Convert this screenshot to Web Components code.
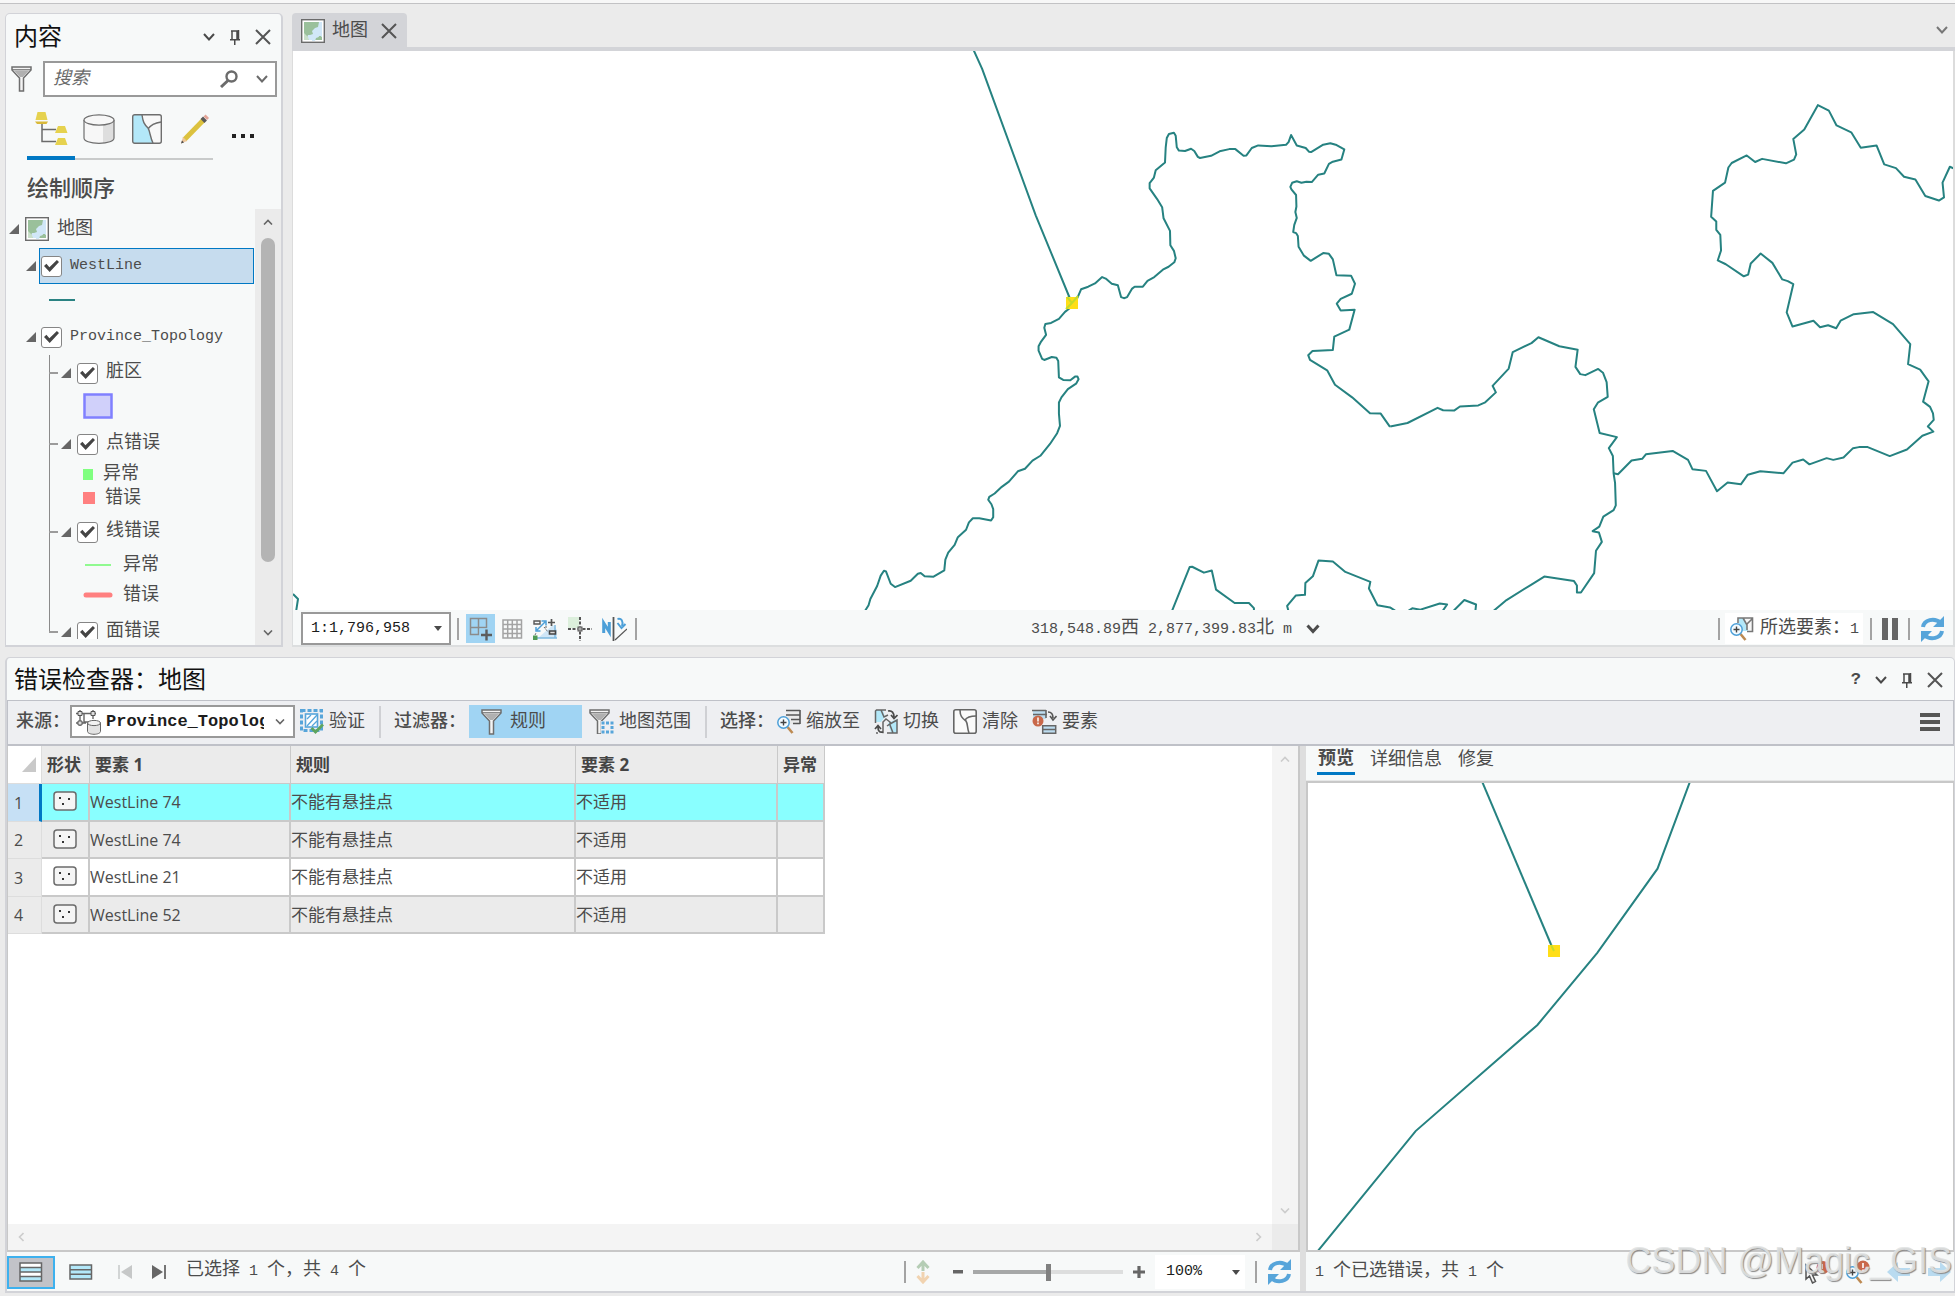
<!DOCTYPE html>
<html lang="zh-CN">
<head>
<meta charset="utf-8">
<title>错误检查器</title>
<style>
  html, body { margin: 0; height: 100%; }
  body { background: #ebebeb; overflow: hidden; font-family: "Liberation Mono", "Noto Sans CJK SC", sans-serif; color: #4c4c4c; }
</style>
</head>
<body>
<gis-app></gis-app>
<script>
/* ---------- shared helpers ---------- */

// Latin runs are set a little smaller than the Chinese around them.
const t = s => s.replace(/[\x20-\x7e]+/g, m => `<span class="lat">${m}</span>`);

const base = `
  *, *::before, *::after { box-sizing: border-box; }
  :host { display: block; box-sizing: border-box; }
  .lat { font-family: "Liberation Mono", monospace; font-size: 15px; white-space: pre; }
  button, select, input { font: inherit; color: inherit; margin: 0; }
  button { display: inline-flex; align-items: center; justify-content: center; background: none; border: 0; padding: 0; white-space: nowrap; }
  h1, h2, p { margin: 0; font-weight: inherit; font-size: inherit; }
  .sep { flex: none; width: 2px; height: 22px; background: #a3a3a3; }
  .grow { flex: 1; }
`;

const define = (tag, css, html) => customElements.define(tag, class extends HTMLElement {
  connectedCallback() {
    if (this.shadowRoot) return;
    const root = this.attachShadow({ mode: "open" });
    root.innerHTML = `<style>${base}${css}</style>${typeof html === "function" ? html(this) : html}`;
  }
});

/* ---------- icons: [width, height, drawing] ---------- */

const refresh = `<g fill="none" stroke="#57a5da" stroke-width="4"><path d="M3 11C4 4 14 1 21 7"/><path d="M22 15C21 22 11 25 4 19"/></g><path fill="#57a5da" d="M24 0v11H13zM1 26V15h11z"/>`;
const funnel = `<path d="M1 1h19v3l-7.500 8V25h-4V12L1 4z" fill="#f4f4f4" stroke="#6e6e6e" stroke-width="1.500"/><path d="M3 4.500h15l-6 6.500h-3z" fill="#b0b0b0"/><path d="M1 3.700h19" stroke="#6e6e6e"/>`;
const magnifier = (x, y) => `<g transform="translate(${x} ${y})"><path d="M10.500 11l5 6" stroke="#bd8a52" stroke-width="2.600"/><circle cx="6.500" cy="6.500" r="5.700" fill="#f4fbff" stroke="#4c9fd8" stroke-width="1.500"/><path d="M3.500 6.500h6M6.500 3.500v6" stroke="#444" stroke-width="1.400"/></g>`;

const icons = {
  chevron: [12, 8, `<path d="M1 1l5 5.500L11 1" fill="none" stroke="currentColor" stroke-width="2"/>`],
  chevronBold: [14, 10, `<path d="M1.500 1.500L7 7.500l5.500-6" fill="none" stroke="currentColor" stroke-width="3"/>`],
  chevronUp: [10, 6, `<path d="M1 5.500l4-4 4 4" fill="none" stroke="currentColor" stroke-width="1.600"/>`],
  chevronDown: [10, 6, `<path d="M1 .5l4 4 4-4" fill="none" stroke="currentColor" stroke-width="1.600"/>`],
  chevronLeft: [6, 10, `<path d="M5.500 1l-4 4 4 4" fill="none" stroke="currentColor" stroke-width="1.600"/>`],
  chevronRight: [6, 10, `<path d="M.5 1l4 4-4 4" fill="none" stroke="currentColor" stroke-width="1.600"/>`],
  caret: [8, 5, `<path d="M0 0h8L4 5z" fill="#4a4a4a"/>`],
  pin: [12, 15, `<path d="M3 1v8M9.500 0v9M8 1v8M2 1h8" fill="none" stroke="#4a4a4a" stroke-width="1.500"/><path d="M8 1h2v8H8zM1 9h10v1.500H1zM5 10h1.500v5H5z" fill="#4a4a4a"/>`],
  close: [16, 16, `<path d="M1 1l14 14M15 1L1 15" stroke="#555" stroke-width="2"/>`],
  funnel: [21, 26, funnel],
  search: [18, 18, `<circle cx="11.500" cy="6.500" r="5" fill="none" stroke="#6b6b6b" stroke-width="2.400"/><path d="M8 10.500l-7 6.500" stroke="#6b6b6b" stroke-width="3"/>`],
  map: [24, 24, `<rect x=".7" y=".7" width="22.600" height="22.600" fill="#fff" stroke="#6b6b6b" stroke-width="1.400"/><path fill="#9ac09b" d="M3 3h18v18H3z"/><path fill="#d1e7f8" d="M21 3h-3l-1 5-3 1-3 3 1 3-3 1H7l-1 3 2 2h3l0 1h3l1-3 3-1h3z"/><path d="M17 21l1-4h2l1 2v2z" fill="#9ac09b"/><path d="M3 14l4 4 1 3H3z" fill="#c9dfc9"/>`],
  order: [34, 34, `<path d="M8 12v17.500h14M8 17.500h14" fill="none" stroke="#6b6b6b" stroke-width="1.500"/><path fill="#e6d24f" d="M3.500 0h8l2 8h-12zM24 14h7l2.500 7H21zM24 26h7l2.500 7H21z"/><path fill="#d9b93a" d="M1 9.500h13L12.500 12H3z"/>`],
  cylinder: [32, 30, `<path d="M1 6v18c0 3 6 5.300 15 5.300S31 27 31 24V6z" fill="#f7f7f7"/><path d="M20 10v19c7-.7 11-2.500 11-5V6c-1 2.500-5 3.700-11 4z" fill="#dedede"/><path d="M1 6v18c0 3 6 5.300 15 5.300S31 27 31 24V6" fill="none" stroke="#6e6e6e" stroke-width="1.200"/><ellipse cx="16" cy="6" rx="15" ry="5.200" fill="#f7f7f7" stroke="#6e6e6e" stroke-width="1.200"/>`],
  selection: [30, 30, `<rect x=".7" y=".7" width="28.600" height="28.600" rx="2" fill="#f8f8f8"/><path fill="#b3e8f9" d="M1 1h9c1 7 2 9 6 13 2 3 2 9 5 15H1z"/><path d="M10 1c1 7 2 9 6 13 2 3 2 9 5 15M16 15c2-3 6-6 13-7" fill="none" stroke="#6e6e6e" stroke-width="1.400"/><rect x=".7" y=".7" width="28.600" height="28.600" rx="2" fill="none" stroke="#6e6e6e" stroke-width="1.400"/>`],
  pencil: [30, 30, `<path d="M4.500 25.500L23.500 6" stroke="#dcc23f" stroke-width="5"/><path d="M1 29.500l2-6.500 4 4z" fill="#ecc59a"/><path d="M1 29.500l1-3 2 2z" fill="#4c4c4c"/><path d="M22.500 7l2.500-2.500" stroke="#5a5a5a" stroke-width="5.500"/><path d="M25.300 4.200l2-1.900" stroke="#e3a497" stroke-width="5"/>`],
  dots: [22, 4, `<path fill="#222" d="M0 0h4v4H0zM9 0h4v4H9zM18 0h4v4h-4z"/>`],
  twisty: [10, 10, `<path d="M10 0v10H0z" fill="#666"/>`],
  snap: [24, 24, `<path d="M1.500 1.500h16v9h-16zM1.500 1.500h8v16h-8zM1.500 10.500h8" fill="none" stroke="#8b8b8b" stroke-width="1.500"/><path d="M10.500 11.500h13v12h-13z" fill="#a0d4f3"/><path d="M12 18h11M17.500 12.500v11" stroke="#5d5d5d" stroke-width="2.400"/>`],
  grid: [21, 20, `<path d="M1 1h18.500v18H1zM1 5.500h18.500M1 10h18.500M1 14.500h18.500M5.700 1v18M10.300 1v18M15 1v18" fill="none" stroke="#a3a3a3" stroke-width="1.500"/>`],
  infer: [25, 23, `<path d="M5 21L20 8l4 5v8z" fill="#cfe6f7"/><path d="M3 21h21M22 8v13" stroke="#7fb9e0" stroke-width="1.500" fill="none"/><path d="M1 4h6v3H1z" fill="none" stroke="#555" stroke-width="1.400"/><path d="M15 5.500h7M18.500 2v7" stroke="#555" stroke-width="1.700"/><path d="M4 13l8-8M8.500 4H13v4.500M3 10v4h4.500" fill="none" stroke="#4c9fd8" stroke-width="1.500"/><path d="M11 10l4 5M2 18l1-2M13 9v2" stroke="#666" stroke-dasharray="2 1"/><path d="M16.500 14h6v3h-6z" fill="#ddd" stroke="#444" stroke-width="1.600"/><path d="M0 18.500h4.500V23H0z" fill="#4f9b55"/>`],
  cross: [24, 24, `<path fill="#dcefdc" d="M0 0h11v11H0z"/><path d="M0 12h9.500M14.500 12H24M12 0v9.500M12 14.500V24" stroke="#555" stroke-width="2" stroke-dasharray="3 1.500"/><rect x="10" y="10" width="4" height="4" fill="#aaa" stroke="#555"/>`],
  north: [25, 24, `<path d="M1.700 16V6l5.600 9V5" fill="none" stroke="#4c9fd8" stroke-width="3"/><path d="M11.500 0v24" stroke="#555" stroke-width="1.800"/><path d="M13 23L25 12" stroke="#555" stroke-width="1.200"/><path d="M15.500 2c4-1 6 2 4.500 7M15.500 6l4 5 4-4" fill="none" stroke="#4c9fd8" stroke-width="2"/>`],
  zoomSelected: [24, 24, `<path d="M9 1h13.500v13H9z" fill="#f7f7f7"/><path d="M9 1h5l2 5 2 8H9z" fill="#b3e8f9"/><path d="M8 6V1h14.500v13.500H17M13 1l4 7v5M17 7l5-5" fill="none" stroke="#777" stroke-width="1.600"/>${magnifier(0, 6)}`],
  pause: [16, 22, `<path fill="#666" d="M0 0h6v22H0zM10 0h6v22h-6z"/>`],
  refresh: [25, 26, refresh],
  source: [26, 26, `<path d="M4 1v16M0 4.500h20M17 1v9M0 14h10M8 4v9h8" fill="none" stroke="#666" stroke-width="1.400"/><path d="M2 2.500h4v4H2zM15 2.500h4v4h-4zM2 12h4v4H2z" fill="#ddd" stroke="#555"/><path d="M11.500 14v8.500c0 1.500 3 2.800 6.500 2.800s6.500-1.300 6.500-2.800V14z" fill="#e3e3e3" stroke="#666"/><ellipse cx="18" cy="14" rx="6.500" ry="2.600" fill="#f2f2f2" stroke="#666"/>`],
  validate: [24, 25, `<rect x="1.500" y="1.500" width="20" height="20" fill="none" stroke="#57a5da" stroke-width="3" stroke-dasharray="4 2"/><rect x="5.500" y="5" width="12" height="13" fill="#fff" stroke="#57a5da" stroke-width="1.600"/><path d="M7 17L17 6M7 10l4-4M12 17l5-5" stroke="#57a5da" stroke-width="1.300"/><path d="M11.500 19l4 4L23 15.500" fill="none" stroke="#5da45f" stroke-width="2.800"/>`],
  extent: [25, 25, `${funnel}<path d="M12 12h13v13H12z" fill="#eeeff2"/><path d="M12.500 12.500h3v3h-3zM17 12.500h3v3h-3zM21.500 12.500h3v3h-3zM12.500 17h3v3h-3zM21.500 17h3v3h-3zM12.500 21.500h3v3h-3zM17 21.500h3v3h-3zM21.500 21.500h3v3h-3z" fill="#57a5da"/>`],
  zoomTo: [24, 25, `<path d="M9 1h14v14H13" fill="#e9e9e9"/><path d="M9 1.500h14M9 6h14M14 10.500h9M16 14.500h7M23 1v14" stroke="#555" stroke-width="1.600"/>${magnifier(0, 7)}`],
  toggle: [24, 25, `<path d="M1 1h8l2 7-4 5H1zM14 14l9-4v14h-6z" fill="#b3e8f9"/><path d="M1.500 14V2l1-1H12M7 1l3 7 4-2M9 24.200V13l3-3 4 3v3M13 17l3-2 7-4v13H13M16 16l3 8M4 24h-2" fill="none" stroke="#666" stroke-width="1.500"/><path d="M14 2c4-1 6 2 6 6M17 6l3 3.500L23.500 6M9 23c-4 1-5-2-5-5M1 20l3-3.500L7 20" fill="none" stroke="#4a4a4a" stroke-width="1.700"/>`],
  clear: [24, 25, `<rect x=".8" y=".8" width="22.400" height="23.400" rx="2" fill="#fafafa" stroke="#666" stroke-width="1.600"/><path d="M7 1c0 6 2 8 6 11 2 3 1 7 3 12M12 11c2-3 6-4 11-4" fill="none" stroke="#666" stroke-width="1.600"/>`],
  features: [25, 25, `<path d="M1 1h13v9H1z" fill="#bcdcf0"/><path d="M0 1.500h14M1 5.500h14M14 1v8" stroke="#666" stroke-width="1.600" fill="none"/><ellipse cx="6" cy="12" rx="5.500" ry="5.500" fill="#c9684a"/><path d="M6 8.500v4M6 13.500v1.800" stroke="#fff" stroke-width="1.500"/><path d="M10.700 16.700h13v7.500h-13zM10.700 20.500h13" fill="#bcdcf0" stroke="#666" stroke-width="1.500"/><path d="M16 3c4 0 5 2 5 6M18 7l3 4 3.500-4" fill="none" stroke="#555" stroke-width="1.600"/>`],
  menu: [20, 18, `<path d="M0 2h20M0 9h20M0 16h20" stroke="#555" stroke-width="4"/>`],
  shape: [24, 20, `<rect x="1" y="1" width="22" height="18" rx="3" fill="#f5f5f5" stroke="#6b6b6b" stroke-width="1.500"/><path fill="#333" d="M6 6h2v2H6zM15 7h2v2h-2zM9 12h2v2H9z"/>`],
  allRows: [24, 20, `<path d="M1 1h21.500v18H1z" fill="#fff"/><path d="M1 5.500h21.500V10H1zM1 14.500h21.500V19H1z" fill="#b3e8f9"/><path d="M1 1h21.500v18H1zM1 5.500h21.500M1 10h21.500M1 14.500h21.500" fill="none" stroke="#666" stroke-width="1.500"/>`],
  selRows: [24, 16, `<path d="M1 1h21.500v14H1zM1 5.700h21.500M1 10.300h21.500" fill="#b3e8f9" stroke="#666" stroke-width="1.500"/>`],
  first: [14, 14, `<path d="M1 0v14" stroke="#c6c8c8" stroke-width="1.500"/><path d="M14 0v14L3 7z" fill="#c6c8c8"/>`],
  last: [14, 14, `<path d="M13 0v14" stroke="#666" stroke-width="1.800"/><path d="M0 0v14l11-7z" fill="#666"/>`],
  height: [14, 24, `<path d="M7 2v9M1.500 8L7 2l5.500 6" fill="none" stroke="#b5cdb5" stroke-width="3"/><path d="M7 12v9M1.500 16L7 22l5.500-6" fill="none" stroke="#f1d3b0" stroke-width="3"/>`],
  minus: [10, 4, `<path fill="#666" d="M0 0h10v3.500H0z"/>`],
  plus: [12, 12, `<path d="M0 6h12M6 0v12" stroke="#666" stroke-width="3.200"/>`],
  selectError: [25, 24, `<circle cx="18" cy="7.500" r="6.500" fill="#c9684a"/><path d="M17 4v5M17 10v2" stroke="#fff" stroke-width="1.600"/><path d="M1 5v14l3.500-3 3 7 3-1.500-3-6.500H12z" fill="#f7f7f7" stroke="#555" stroke-width="1.500"/>`],
  zoomError: [25, 24, `<circle cx="17" cy="7" r="6.500" fill="#c9684a"/><path d="M17 3v5M17 9.500v2" stroke="#fff" stroke-width="1.600"/>${magnifier(0, 6)}`],
  prev: [24, 20, `<path d="M0 10L11 0v6h12v8H11v6z" fill="#b9dbf0"/>`],
  next: [24, 20, `<path d="M24 10L13 0v6H1v8h12v6z" fill="#b9dbf0"/>`],
  corner: [14, 15, `<path d="M14 0v15H0z" fill="#c9c9c9"/>`],
};

define("gis-icon", `:host { display: inline-flex; flex: none; } svg { display: block; }`, el => {
  const [w, h, body] = icons[el.getAttribute("name")];
  return `<svg width="${w}" height="${h}" viewBox="0 0 ${w} ${h}" aria-hidden="true">${body}</svg>`;
});

/* ---------- window controls ---------- */

define("gis-window-controls",
  `:host { display: flex; align-items: center; gap: 14px; color: #4a4a4a; } .help { font-size: 17px; font-weight: bold; line-height: 20px; }`,
  el => `${el.hasAttribute("help") ? `<button class="help" aria-label="帮助">?</button>` : ""}
    <button aria-label="菜单"><gis-icon name="chevron"></gis-icon></button>
    <button aria-label="自动隐藏"><gis-icon name="pin"></gis-icon></button>
    <button aria-label="关闭"><gis-icon name="close"></gis-icon></button>`);

/* ---------- contents pane ---------- */

define("gis-layer", `
  :host { height: 36px; padding-left: 20px; font-size: 18px; line-height: 24px; }
  .row { display: flex; align-items: center; height: 100%; }
  .body { display: flex; align-items: center; flex: 1; height: 36px; padding-left: 1px; border: 1px solid transparent; margin: 0 1px 0 3px; gap: 8px; }
  :host([selected]) .body { background: #c6dcee; border-color: #0078c4; }
  :host([sub]) { padding-left: 43px; }
  :host([sub]) .row::before { content: ""; width: 9px; height: 2px; background: #9b9b9b; margin: 0 3px 0 0; }
  :host([sub]) .body { margin-left: 4px; }
  input { appearance: none; width: 21px; height: 21px; flex: none; border: 1px solid #858585; border-radius: 3px; background: #fff; display: grid; place-items: center; }
  input:checked::after { content: ""; width: 15px; height: 12px; background: #444; clip-path: polygon(0 50%, 16% 32%, 36% 60%, 86% 0, 100% 16%, 38% 100%); }
  label { white-space: nowrap; padding-bottom: 2px; }
`, el => `<div class="row"><gis-icon name="twisty"></gis-icon><div class="body"><input type="checkbox" id="c" checked><label for="c">${t(el.getAttribute("name"))}</label></div></div>`);

define("gis-symbol", `
  :host { display: flex; align-items: center; font-size: 18px; line-height: 24px; }
`, el => {
  const g = {
    teal: `<svg width="26" height="4"><path d="M0 2h26" stroke="#2a8383" stroke-width="2"/></svg>`,
    area: `<svg width="30" height="26"><rect x="1.500" y="1.500" width="27" height="23" fill="#d0d0fa" stroke="#8080ff" stroke-width="2.500"/></svg>`,
    greenDot: `<svg width="10" height="11"><path d="M0 0h10v11H0z" fill="#80ff80"/></svg>`,
    redDot: `<svg width="12" height="12"><path d="M0 0h12v12H0z" fill="#ff8080"/></svg>`,
    greenLine: `<svg width="30" height="4"><path d="M2 2h26" stroke="#90fa90" stroke-width="2"/></svg>`,
    redLine: `<svg width="30" height="6"><path d="M3 3h24" stroke="#ff8080" stroke-width="5" stroke-linecap="round"/></svg>`,
  }[el.getAttribute("kind")];
  return `${g}<slot></slot>`;
});

define("gis-contents", `
  :host { display: flex; flex-direction: column; width: 278px; flex: none; min-height: 0; background: #f7f9f9; border: 2px solid #d2d3d8; border-width: 1px 2px 2px 1px; border-radius: 5px 5px 0 0; overflow: hidden; }
  header { display: flex; align-items: center; justify-content: space-between; height: 46px; padding: 0 10px 0 8px; flex: none; }
  h1 { font-size: 24px; line-height: 36px; padding-top: 3px; color: #111; }
  .find { display: flex; align-items: center; gap: 11px; height: 38px; padding: 0 4px 0 5px; flex: none; }
  .box { flex: 1; display: flex; align-items: center; height: 36px; border: 2px solid #999; background: #fff; padding: 0 7px 0 8px; min-width: 0; }
  .box input { flex: 1; min-width: 0; border: 0; outline: 0; background: none; font-size: 18px; padding: 0; height: 28px; font-style: italic; }
  .box input::placeholder { color: #6a6a6a; opacity: 1; }
  .box button + button { margin-left: 18px; color: #6b6b6b; }
  nav { display: flex; align-items: flex-start; height: 66px; padding: 14px 0 0 21px; flex: none; }
  nav button { width: 48px; height: 48px; padding-bottom: 12px; border-bottom: 2px solid #c9cbcb; }
  nav button.on { border-bottom: 4px solid #0078c4; padding-bottom: 10px; }
  nav button.last { width: 42px; padding-left: 6px; }
  nav button.more { width: 60px; border: 0; padding: 0; }
  h2 { font-size: 22px; line-height: 30px; font-weight: 500; padding: 12px 0 0 21px; height: 45px; flex: none; }
  .scroll { display: flex; flex: 1; min-height: 0; }
  .tree { flex: 1; overflow: hidden; margin-bottom: 6px; }
  .rootrow { display: flex; align-items: center; height: 39px; padding-left: 3px; font-size: 18px; line-height: 24px; gap: 6px; }
  .rootrow span { padding-left: 2px; }
  .group { background: linear-gradient(#8b8b8b, #8b8b8b) 43px 0 / 1px calc(100% - 18px) no-repeat; }
  .s1 { height: 35px; padding: 0 0 4px 43px; } .s2 { height: 35px; padding: 0 0 5px 77px; }
  .s3 { height: 24px; padding-left: 77px; gap: 10px; } .s4 { height: 30px; padding-left: 77px; gap: 10px; }
  .end { margin-bottom: 4px; }
  .bar { width: 26px; background: #ebebeb; display: flex; flex-direction: column; align-items: center; justify-content: space-between; padding: 10px 0 9px; color: #666; }
  .thumb { width: 14px; flex: 1; margin: 13px 0 68px; border-radius: 7px; background: #b4b4b4; }
`, `
  <header><h1>内容</h1><gis-window-controls></gis-window-controls></header>
  <div class="find"><gis-icon name="funnel"></gis-icon>
    <div class="box"><input type="text" placeholder="搜索" aria-label="搜索"><button aria-label="查找"><gis-icon name="search"></gis-icon></button><button aria-label="搜索选项"><gis-icon name="chevron"></gis-icon></button></div></div>
  <nav>
    <button class="on" aria-label="按绘制顺序列出"><gis-icon name="order"></gis-icon></button>
    <button aria-label="按数据源列出"><gis-icon name="cylinder"></gis-icon></button>
    <button aria-label="按选择列出"><gis-icon name="selection"></gis-icon></button>
    <button class="last" aria-label="按编辑列出"><gis-icon name="pencil"></gis-icon></button>
    <button class="more" aria-label="更多"><gis-icon name="dots"></gis-icon></button>
  </nav>
  <h2>绘制顺序</h2>
  <div class="scroll">
    <div class="tree">
      <div class="rootrow"><gis-icon name="twisty"></gis-icon><gis-icon name="map"></gis-icon><span>地图</span></div>
      <gis-layer name="WestLine" selected></gis-layer>
      <gis-symbol class="s1" kind="teal"></gis-symbol>
      <gis-layer name="Province_Topology"></gis-layer>
      <div class="group">
        <gis-layer sub name="脏区"></gis-layer>
        <gis-symbol class="s2" kind="area"></gis-symbol>
        <gis-layer sub name="点错误"></gis-layer>
        <gis-symbol class="s3" kind="greenDot">异常</gis-symbol>
        <gis-symbol class="s3 end" kind="redDot">错误</gis-symbol>
        <gis-layer sub name="线错误"></gis-layer>
        <gis-symbol class="s4" kind="greenLine">异常</gis-symbol>
        <gis-symbol class="s4 end" kind="redLine">错误</gis-symbol>
        <gis-layer sub name="面错误"></gis-layer>
      </div>
    </div>
    <div class="bar"><gis-icon name="chevronUp"></gis-icon><div class="thumb"></div><gis-icon name="chevronDown"></gis-icon></div>
  </div>
`);

/* ---------- map view ---------- */

define("gis-map", `
  :host { display: flex; flex-direction: column; flex: 1; min-width: 0; min-height: 0; }
  .tabs { display: flex; align-items: flex-end; height: 38px; border-bottom: 4px solid #d3d4d8; flex: none; }
  .tab { display: flex; align-items: center; height: 34px; width: 115px; padding: 2px 10px 0 9px; background: #d3d4d8; border-radius: 4px 4px 0 0; font-size: 18px; line-height: 24px; }
  .tab span { padding-left: 7px; flex: 1; }
  .tabs .more { height: 34px; margin: 0 7px 0 auto; color: #777; }
  .canvas { flex: 1; min-height: 0; background: #fff; border: solid #dcdcdc; border-width: 0 2px 0 1px; overflow: hidden; }
  .canvas svg { display: block; width: 100%; height: 100%; }
  polyline { fill: none; stroke: #268281; stroke-width: 2; vector-effect: non-scaling-stroke; stroke-linejoin: round; }
  footer { display: flex; align-items: center; height: 37px; flex: none; background: #f7f9f9; border: solid #dcdedf; border-width: 0 2px 2px 1px; padding: 2px 8px 0; font-size: 18px; line-height: 24px; }
  .scale { position: relative; display: flex; align-items: center; height: 33px; width: 150px; }
  select { appearance: none; width: 100%; height: 33px; border: 2px solid #999; background: #fff; color: #1c1c1c; font-family: "Liberation Mono", monospace; font-size: 15px; padding: 0 8px; border-radius: 0; }
  .scale gis-icon { position: absolute; right: 9px; pointer-events: none; }
  .left { display: flex; align-items: center; }
  .tools { display: flex; align-items: center; gap: 10px; }
  .tools .on { background: #a0d4f3; width: 29px; height: 29px; margin: 0 -3px 0 7px; }
  .left .sep { margin-left: 6px; }
  .left .tools + .sep { margin-left: 8px; }
  .coords { display: flex; align-items: center; justify-content: center; flex: 1; gap: 14px; padding-right: 4px; }
  .right { display: flex; align-items: center; gap: 10px; }
  .sel { height: 31px; background: #fff; gap: 6px; padding: 0 4px 0 5px; margin: 0 -3px 0 -5px; font-size: 18px; }
`, `
  <div class="tabs"><div class="tab"><gis-icon name="map"></gis-icon><span>地图</span><button aria-label="关闭视图"><gis-icon name="close"></gis-icon></button></div>
    <button class="more" aria-label="视图列表"><gis-icon name="chevron"></gis-icon></button></div>
  <div class="canvas"><svg>
    <g transform="translate(557 -11) scale(.35714 .3699)">
      <polyline points="346,27 370,78 520,474 621,711"/>
      <polyline points="41,1545 52,1528 57,1511 76,1476 86,1448 95,1435 101,1437 114,1470 126,1479 170,1462 190,1443 198,1441 209,1450 234,1451 264,1434 267,1405 275,1386 293,1365 302,1344 325,1324 333,1304 344,1293 362,1293 395,1299 401,1290 401,1268 396,1255 387,1243 390,1235 405,1226 425,1208 445,1194 470,1166 490,1159 511,1137 533,1124 560,1092 580,1063 588,1043 585,1010 585,980 592,966 610,944 633,929 640,917 637,910 630,910 617,920 597,919 585,912 583,868 578,859 565,857 544,865 538,862 528,840 528,828 534,817 549,797 544,778 547,768 563,765 585,754 602,735 615,725 633,705 647,674 667,667 686,658 706,641 716,645 733,659 750,663 759,695 767,698 776,695 790,672 797,667 820,667 833,651 852,641 876,621 892,613 908,601 912,590 907,570 897,555 896,516 878,482 874,452 860,430 839,401 839,387 851,372 856,352 882,331 884,290 887,265 893,254 907,251 912,259 915,290 921,299 938,300 955,294 964,300 974,316 980,319 1011,313 1035,301 1062,295 1079,295 1102,313 1110,312 1125,292 1143,285 1180,287 1221,283 1228,276 1235,257 1251,285 1276,292 1285,302 1291,303 1325,283 1345,279 1360,283 1384,296 1376,323 1352,329 1341,335 1328,361 1311,364 1293,384 1278,383 1264,386 1251,382 1238,386 1233,397 1236,404 1249,419 1250,450 1247,465 1251,481 1244,500 1241,519 1249,522 1254,530 1256,559 1271,583 1290,597 1325,576 1341,578 1352,593 1362,636 1403,637 1414,659 1405,686 1374,700 1363,713 1374,731 1413,729 1398,783 1356,802 1352,838 1295,841 1283,852 1288,865 1336,893 1358,932 1406,966 1456,1009 1486,1010 1512,1046"/>
      <polyline points="901,1545 951,1425 958,1424 991,1440 1013,1434 1025,1486 1077,1522 1117,1522 1131,1536 1131,1545"/>
      <polyline points="1228,1545 1224,1530 1248,1502 1274,1500 1275,1468 1296,1450 1312,1407 1352,1410 1387,1438 1457,1465 1453,1483 1477,1528 1512,1534 1530,1545"/>
    </g>
    <g transform="translate(1087 29) scale(.36671 .34439)">
      <polyline points="28,1006 75,996 157,952 172,959 202,960 218,948 268,945 287,936 316,907 307,888 351,838 362,790 413,764 432,747 489,773 539,783 533,833 546,854 560,857 595,839 608,850 618,877 621,920 594,937 583,956 599,1025 646,1037 624,1069 635,1092 637,1142 641,1170 643,1235 637,1249 609,1268 598,1297 580,1310 597,1314 605,1341 589,1367 584,1432 548,1488 537,1488 537,1468 529,1455 448,1442 413,1465 345,1510 308,1543"/>
      <polyline points="637,1142 649,1145 686,1105 715,1100 725,1087 798,1077 840,1103 852,1130 889,1135 919,1194 948,1169 984,1174 1003,1146 1037,1136 1100,1142 1125,1111 1154,1102 1171,1116 1218,1098 1236,1103 1264,1096 1290,1069 1306,1066 1330,1066 1390,1092 1437,1073 1479,1033 1509,1021 1494,1006 1510,987 1508,968 1500,949 1481,934 1496,875 1473,841 1440,825 1446,767 1399,709 1345,674 1292,680 1256,699 1244,721 1222,712 1200,718 1182,699 1125,716 1109,675 1127,593 1112,584 1097,579 1070,531 1038,504 1011,533 1004,565 992,570 943,535 921,524 930,495 928,450 917,435 917,411 903,397 908,322 941,298 950,254 959,241 1000,219 1023,238 1042,229 1107,242 1129,231 1135,216 1127,171 1157,144 1194,73 1224,89 1245,132 1285,152 1311,197 1354,190 1375,245 1407,256 1429,281 1460,289 1487,337 1524,350 1538,341 1534,298 1554,252 1567,258"/>
      <polyline points="75,1543 88,1534 110,1538 163,1520 183,1523 170,1543"/>
      <polyline points="199,1543 230,1510 262,1523 260,1543"/>
    </g>
    <polyline points="0,543 5,548 3,561"/>
    <rect x="773" y="246" width="12" height="12" fill="#ffde17"/>
    <path d="M774 246l5 6 6-7M779 252l-6 6" fill="none" stroke="#c5dc2a" stroke-width="2"/>
  </svg></div>
  <footer>
    <div class="left">
      <div class="scale"><select aria-label="比例尺"><option>1:1,796,958</option></select><gis-icon name="caret"></gis-icon></div>
      <div class="sep"></div>
      <div class="tools">
        <button class="on" aria-label="捕捉"><gis-icon name="snap"></gis-icon></button>
        <button aria-label="格网"><gis-icon name="grid"></gis-icon></button>
        <button aria-label="推断约束"><gis-icon name="infer"></gis-icon></button>
        <button aria-label="动态约束"><gis-icon name="cross"></gis-icon></button>
        <button aria-label="地面到格网校正"><gis-icon name="north"></gis-icon></button>
      </div>
      <div class="sep"></div>
    </div>
    <div class="coords"><span>${t("318,548.89西 2,877,399.83北 m")}</span><button aria-label="单位"><gis-icon name="chevronBold"></gis-icon></button></div>
    <div class="right">
      <div class="sep"></div>
      <button class="sel"><gis-icon name="zoomSelected"></gis-icon><span>${t("所选要素：1")}</span></button>
      <div class="sep"></div>
      <button aria-label="暂停绘制"><gis-icon name="pause"></gis-icon></button>
      <div class="sep"></div>
      <button aria-label="刷新"><gis-icon name="refresh"></gis-icon></button>
    </div>
  </footer>
`);

/* ---------- error inspector ---------- */

define("gis-tool", `
  :host { display: inline-flex; }
  button { height: 33px; gap: 5px; font-size: 18px; line-height: 24px; }
  :host([active]) button { background: #a0d4f3; width: 113px; justify-content: flex-start; padding-left: 12px; gap: 8px; }
`, el => `<button><gis-icon name="${el.getAttribute("icon")}"></gis-icon><slot></slot></button>`);

define("gis-inspector-toolbar", `
  :host { display: flex; align-items: center; height: 46px; flex: none; background: #eeeff2; border: solid #bfc1c8; border-width: 1px 1px 2px; padding: 0 13px 2px 8px; font-size: 18px; line-height: 24px; }
  .cap { font-weight: 500; white-space: nowrap; }
  .source { position: relative; display: flex; align-items: center; width: 225px; height: 33px; border: 2px solid #999; background: #fff; }
  .source gis-icon:first-child { position: absolute; left: 4px; pointer-events: none; }
  .source gis-icon:last-child { position: absolute; right: 8px; pointer-events: none; color: #666; }
  select { appearance: none; border: 0; background: none; width: 192px; height: 29px; padding: 0 0 0 34px; font: bold 17px "Liberation Mono", monospace; color: #1c1c1c; overflow: hidden; }
  .sep { height: 32px; background: #cfd0d4; }
  gis-tool, .sep { margin-left: 14px; }
  .source + gis-tool { margin-left: 5px; }
  .sep + .cap { margin-left: 13px; }
  .cap + gis-tool { margin-left: 3px; }
  [active] + gis-tool { margin-left: 7px; }
`, `
  <label class="cap" for="src">来源：</label>
  <div class="source"><gis-icon name="source"></gis-icon><select id="src"><option>Province_Topology</option></select><gis-icon name="chevronDown"></gis-icon></div>
  <gis-tool icon="validate">验证</gis-tool>
  <div class="sep"></div><span class="cap">过滤器：</span>
  <gis-tool icon="funnel" active>规则</gis-tool>
  <gis-tool icon="extent">地图范围</gis-tool>
  <div class="sep"></div><span class="cap">选择：</span>
  <gis-tool icon="zoomTo">缩放至</gis-tool>
  <gis-tool icon="toggle">切换</gis-tool>
  <gis-tool icon="clear">清除</gis-tool>
  <gis-tool icon="features">要素</gis-tool>
  <div class="grow"></div>
  <button aria-label="选项"><gis-icon name="menu"></gis-icon></button>
`);

const errors = [["WestLine 74", 1], ["WestLine 74"], ["WestLine 21"], ["WestLine 52"]];

define("gis-error-table", `
  :host { display: grid; grid-template: minmax(0, 1fr) 26px / minmax(0, 1fr) 26px; flex: 1; min-height: 0; background: #fff; border: solid #c8c8c8; border-width: 0 2px 2px 1px; }
  table { border-collapse: separate; border-spacing: 0; table-layout: fixed; width: 817px; font: 16px/24px "Open Sans", "Noto Sans CJK SC", sans-serif; }
  .cjk { font-size: 17px; }
  th, td { padding: 0; text-align: left; white-space: nowrap; height: 37px; border: solid #c9c9c9; border-width: 0 2px 2px 0; font-weight: 400; }
  thead th { background: #ebebeb; font-weight: 700; padding-left: 5px; font-size: 17px; border-width: 0 1px 1px 0; height: 38px; color: #444; }
  thead th:first-child { background: #fff; vertical-align: bottom; padding: 0 0 5px 14px; border-color: #ddd; }
  tbody th { background: #ebebeb; padding-left: 6px; border-color: #ddd; border-width: 0 1px 1px 0; }
  td gis-icon { display: block; width: 24px; margin: 0 auto; padding-bottom: 2px; }
  tbody tr:nth-child(odd) > * { height: 38px; }
  tbody tr:nth-child(even) td { background: #ebebeb; }
  tbody tr.on td { background: #89ffff; }
  tbody tr.on th { background: #c6e0f5; border-right: 3px solid #0078c4; }
  .v, .h { display: flex; justify-content: space-between; align-items: center; background: #f4f4f4; color: #ccc; }
  .v { flex-direction: column; padding: 10px 0; }
  .h { padding: 0 10px; }
  .corner { background: #ebebeb; }
`, `
  <div><table>
    <colgroup><col style="width:34px"><col style="width:48px"><col style="width:201px"><col style="width:285px"><col style="width:202px"><col style="width:47px"></colgroup>
    <thead><tr><th><gis-icon name="corner"></gis-icon></th><th>形状</th><th>要素 1</th><th>规则</th><th>要素 2</th><th>异常</th></tr></thead>
    <tbody>${errors.map(([f, on], i) => `<tr${on ? ' class="on"' : ""}><th>${i + 1}</th><td><gis-icon name="shape"></gis-icon></td><td>${f}</td><td class="cjk">不能有悬挂点</td><td class="cjk">不适用</td><td></td></tr>`).join("")}</tbody>
  </table></div>
  <div class="v"><gis-icon name="chevronUp"></gis-icon><gis-icon name="chevronDown"></gis-icon></div>
  <div class="h"><gis-icon name="chevronLeft"></gis-icon><gis-icon name="chevronRight"></gis-icon></div>
  <div class="corner"></div>
`);

define("gis-table-footer", `
  :host { display: flex; align-items: center; height: 39px; flex: none; background: #f7f9f9; font-size: 18px; line-height: 24px; padding: 1px 8px 0 0; }
  .on { width: 48px; height: 33px; border: 1px solid #3db1ee; outline: 1px solid #3db1ee; outline-offset: -2px; background: #c2c3c8; }
  .nav { display: flex; align-items: center; gap: 20px; margin: 0 20px; }
  .nav button:first-child { margin: 0 5px 0 -6px; }
  .status { padding-bottom: 2px; }
  .tools { display: flex; align-items: center; gap: 10px; }
  .tools > :nth-child(3) { margin-left: 13px; }
  .rng { display: flex; width: 150px; }
  input { appearance: none; width: 150px; height: 18px; background: linear-gradient(90deg, #a6a8a8 50%, #dddede 50%) center / 100% 4px no-repeat; }
  input::-webkit-slider-thumb { appearance: none; width: 5px; height: 17px; background: #808080; }
  .pct { position: relative; display: flex; align-items: center; width: 90px; height: 34px; background: #fff; }
  select { appearance: none; border: 0; background: none; width: 100%; height: 34px; padding: 0 11px; font-size: 15px; color: #1c1c1c; }
  .pct gis-icon { position: absolute; right: 5px; pointer-events: none; }
`, `
  <button class="on" aria-label="显示所有记录"><gis-icon name="allRows"></gis-icon></button>
  <div class="nav"><button aria-label="显示所选记录"><gis-icon name="selRows"></gis-icon></button><button aria-label="第一条"><gis-icon name="first"></gis-icon></button><button aria-label="最后一条"><gis-icon name="last"></gis-icon></button></div>
  <span class="status">${t("已选择 1 个，共 4 个")}</span>
  <div class="grow"></div>
  <div class="tools">
    <div class="sep"></div>
    <button aria-label="行高"><gis-icon name="height"></gis-icon></button>
    <button aria-label="缩小"><gis-icon name="minus"></gis-icon></button>
    <div class="rng"><input type="range" min="0" max="100" value="50" aria-label="缩放"></div>
    <button aria-label="放大"><gis-icon name="plus"></gis-icon></button>
    <div class="pct"><select aria-label="缩放百分比"><option>100%</option></select><gis-icon name="caret"></gis-icon></div>
    <div class="sep"></div>
    <button aria-label="刷新"><gis-icon name="refresh"></gis-icon></button>
  </div>
`);

define("gis-preview", `
  :host { display: flex; flex-direction: column; min-width: 0; min-height: 0; background: #f7f9f9; }
  nav { display: flex; align-items: flex-start; gap: 14px; height: 35px; flex: none; padding-left: 11px; font-size: 18px; line-height: 24px; border-bottom: 1px solid #e6e7e7; }
  nav button { height: 29px; padding: 0 1px 2px; }
  nav button.on { font-weight: 700; border-bottom: 3px solid #0078c4; padding-bottom: 0; }
  .canvas { flex: 1; min-height: 0; background: #fff; border: solid #c8c8c8; border-width: 2px 1px 2px 2px; overflow: hidden; }
  svg { display: block; width: 100%; height: 100%; }
  polyline { fill: none; stroke: #268281; stroke-width: 2; vector-effect: non-scaling-stroke; }
  footer { display: flex; align-items: center; height: 39px; flex: none; padding: 0 3px 0 9px; font-size: 18px; line-height: 24px; }
  .tools { display: flex; align-items: center; gap: 16px; }
`, `
  <nav><button class="on">预览</button><button>详细信息</button><button>修复</button></nav>
  <div class="canvas"><svg>
    <g transform="translate(-28 -54) scale(.43048 .36097)">
      <polyline points="470,147 636,615"/>
      <polyline points="952,147 877,387 737,620 598,820 315,1114 88,1446"/>
    </g>
    <rect x="240" y="162" width="12" height="12" fill="#ffde17"/>
    <path d="M243 162l3 6" stroke="#c5dc2a" stroke-width="2"/>
  </svg></div>
  <footer><span>${t("1 个已选错误，共 1 个")}</span><div class="grow"></div>
    <div class="tools">
      <button aria-label="选择错误"><gis-icon name="selectError"></gis-icon></button>
      <button aria-label="缩放至错误"><gis-icon name="zoomError"></gis-icon></button>
      <button aria-label="上一个"><gis-icon name="prev"></gis-icon></button>
      <button aria-label="下一个"><gis-icon name="next"></gis-icon></button>
    </div></footer>
`);

define("gis-inspector", `
  :host { display: flex; flex-direction: column; min-height: 0; background: #f7f9f9; border: 2px solid #d2d3d8; border-width: 1px 1px 2px 2px; border-radius: 5px 5px 0 0; }
  header { display: flex; align-items: center; justify-content: space-between; height: 42px; padding: 2px 11px 0 7px; flex: none; }
  h1 { font-size: 24px; line-height: 36px; padding-top: 3px; color: #111; }
  .panes { display: grid; grid-template-columns: minmax(0, 1293fr) 6px minmax(0, 648fr); flex: 1; min-height: 0; }
  .left { display: flex; flex-direction: column; min-height: 0; }
  .split { background: #dedede; }
`, `
  <header><h1>错误检查器：地图</h1><gis-window-controls help></gis-window-controls></header>
  <gis-inspector-toolbar></gis-inspector-toolbar>
  <div class="panes">
    <div class="left"><gis-error-table></gis-error-table><gis-table-footer></gis-table-footer></div>
    <div class="split"></div>
    <gis-preview></gis-preview>
  </div>
`);

/* ---------- application ---------- */

define("gis-watermark", `
  :host { position: absolute; right: 3px; bottom: 15px; pointer-events: none; font: 36px/40px "Liberation Sans", Arial, sans-serif; color: rgba(226, 228, 228, .9); text-shadow: 1px 1px 1px #8a8a8a; white-space: pre; }
`, `<slot></slot>`);

define("gis-app", `
  :host { position: relative; display: grid; grid-template-rows: minmax(0, 634fr) minmax(0, 636fr); gap: 10px; height: 100vh; padding: 13px 0 3px 5px; background: linear-gradient(#f7f7f7 3px, #c2c2c4 3px 4px, #ebebeb 4px); }
  .top { display: flex; gap: 9px; min-height: 0; }
`, `
  <div class="top"><gis-contents></gis-contents><gis-map></gis-map></div>
  <gis-inspector></gis-inspector>
  <gis-watermark>CSDN @Magic_GIS</gis-watermark>
`);
</script>
</body>
</html>
